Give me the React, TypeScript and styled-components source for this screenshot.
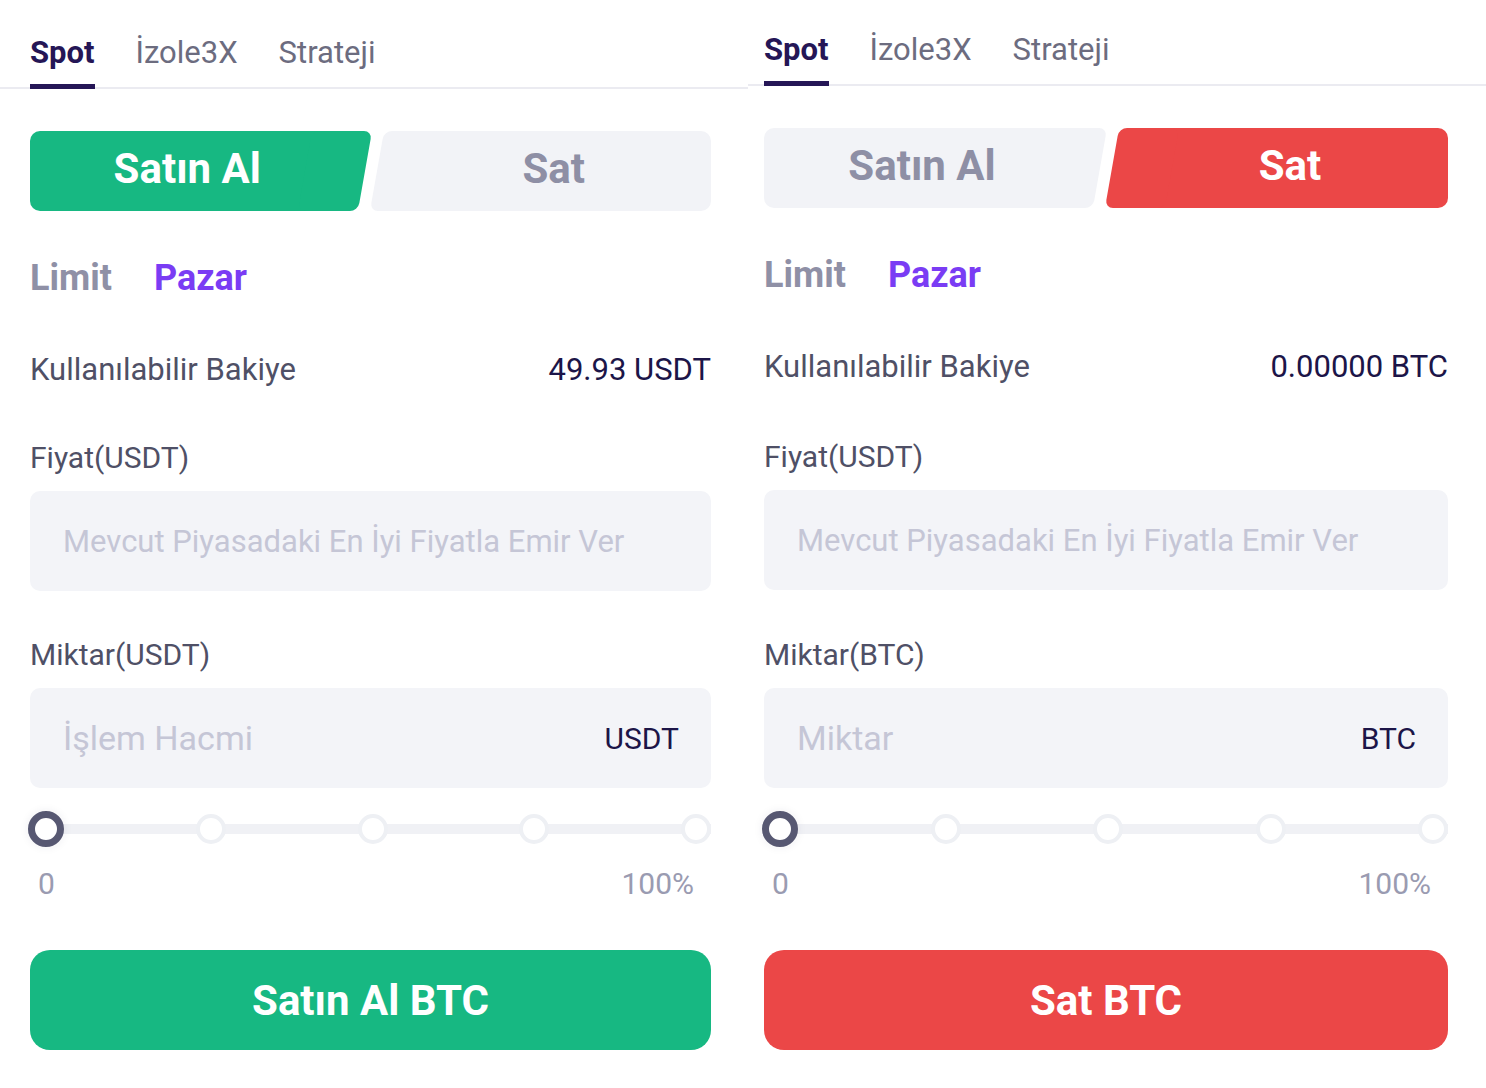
import styled, { createGlobalStyle } from 'styled-components'

const GlobalStyle = createGlobalStyle`
  html, body {
    margin: 0;
    padding: 0;
    background: #ffffff;
  }
  body {
    font-family: Roboto, 'Liberation Sans', sans-serif;
    -webkit-font-smoothing: antialiased;
  }
`

const SPage = styled.div`
  display: flex;
  width: 1486px;
  height: 1088px;
  overflow: hidden;
  background: #ffffff;
`

const SPanel = styled.div<{ $shift: number; $width: number }>`
  box-sizing: border-box;
  width: ${(p) => p.$width}px;
  padding-top: ${(p) => 33 + p.$shift}px;
  display: flex;
  flex-direction: column;
`

const STabBar = styled.div<{ $padLeft: number }>`
  display: flex;
  gap: 41px;
  padding-left: ${(p) => p.$padLeft}px;
  border-bottom: 2px solid #ebebf1;
`

const STab = styled.div<{ $active?: boolean }>`
  line-height: 40px;
  font-size: 31px;
  font-weight: ${(p) => (p.$active ? 700 : 400)};
  color: ${(p) => (p.$active ? '#251656' : '#6c6c7f')};
  padding-bottom: 11px;
  border-bottom: 5px solid ${(p) => (p.$active ? '#251656' : 'transparent')};
  margin-bottom: -2px;
`

const SBody = styled.div<{ $padLeft: number; $padRight: number }>`
  display: flex;
  flex-direction: column;
  padding: 0 ${(p) => p.$padRight}px 0 ${(p) => p.$padLeft}px;
`

const SToggle = styled.div`
  display: flex;
  gap: 12px;
  height: 80px;
  margin-top: 42px;
`

const SToggleButton = styled.div<{ $side: 'left' | 'right'; $bg: string; $color: string }>`
  flex: 1;
  position: relative;
  isolation: isolate;
  display: flex;
  align-items: center;
  justify-content: center;
  font-size: 42px;
  font-weight: 700;
  color: ${(p) => p.$color};
  padding: ${(p) => (p.$side === 'left' ? '0 20px 5px 0' : '0 0 5px 20px')};
  &::before,
  &::after {
    content: '';
    position: absolute;
    z-index: -1;
    top: 0;
    bottom: 0;
    background: ${(p) => p.$bg};
    border-radius: 10px;
  }
  &::before {
    left: ${(p) => (p.$side === 'left' ? '0' : '24px')};
    right: ${(p) => (p.$side === 'left' ? '24px' : '0')};
  }
  &::after {
    width: 60px;
    ${(p) => (p.$side === 'left' ? 'right: 0;' : 'left: 0;')}
    transform: skewX(-10deg);
    transform-origin: ${(p) => (p.$side === 'left' ? 'right center' : 'left center')};
    border-radius: 8px;
  }
`

const SOrderTypes = styled.div`
  display: flex;
  gap: 42px;
  margin-top: 45px;
  line-height: 44px;
  font-size: 36px;
  font-weight: 700;
`

const SOrderType = styled.div<{ $active?: boolean }>`
  color: ${(p) => (p.$active ? '#7a3cf4' : '#8f90a6')};
`

const SBalance = styled.div`
  display: flex;
  justify-content: space-between;
  margin-top: 50px;
  line-height: 40px;
  font-size: 31px;
`

const SBalanceLabel = styled.span`
  color: #4f5066;
`

const SBalanceValue = styled.span`
  color: #1c1548;
`

const SFieldLabel = styled.div<{ $gap: number }>`
  margin-top: ${(p) => p.$gap}px;
  line-height: 40px;
  font-size: 30px;
  color: #4f5066;
`

const SInput = styled.div`
  display: flex;
  align-items: center;
  justify-content: space-between;
  height: 100px;
  margin-top: 13px;
  padding: 0 32px 0 33px;
  background: #f3f4f8;
  border-radius: 10px;
`

const SPlaceholder = styled.span<{ $size: number }>`
  font-size: ${(p) => p.$size}px;
  color: #c5c6d6;
`

const SUnit = styled.span`
  font-size: 30px;
  color: #1c1548;
`

const SSlider = styled.div`
  display: flex;
  align-items: center;
  justify-content: space-between;
  height: 36px;
  margin: 23px 0 0 -2px;
  background: linear-gradient(
    to bottom,
    transparent 13px,
    #f0f1f5 13px,
    #f0f1f5 23px,
    transparent 23px
  );
`

const SDot = styled.div<{ $active?: boolean }>`
  box-sizing: border-box;
  width: ${(p) => (p.$active ? 36 : 30)}px;
  height: ${(p) => (p.$active ? 36 : 30)}px;
  border-radius: 50%;
  background: #ffffff;
  border: ${(p) => (p.$active ? '7px solid #575872' : '4px solid #eef0f4')};
  box-shadow: ${(p) => (p.$active ? '0 0 10px rgba(40, 40, 80, 0.08)' : 'none')};
`

const SSliderLabels = styled.div`
  display: flex;
  justify-content: space-between;
  margin-top: 17px;
  padding: 0 17px 0 8px;
  line-height: 40px;
  font-size: 30px;
  color: #9a9bb1;
`

const SSubmit = styled.div<{ $bg: string }>`
  display: flex;
  align-items: center;
  justify-content: center;
  height: 100px;
  margin-top: 46px;
  border-radius: 20px;
  background: ${(p) => p.$bg};
  color: #ffffff;
  font-size: 42px;
  font-weight: 700;
`

type Side = 'buy' | 'sell'

const GREEN = '#17b882'
const RED = '#eb4747'
const GRAY = '#f2f3f7'

type PanelProps = {
  side: Side
  width: number
  padLeft: number
  padRight: number
  shift: number
  priceGap: number
  amountGap: number
  balance: string
  amountLabel: string
  amountPlaceholder: string
  unit: string
}

const TradePanel = ({
  side,
  width,
  padLeft,
  padRight,
  shift,
  priceGap,
  amountGap,
  balance,
  amountLabel,
  amountPlaceholder,
  unit,
}: PanelProps) => {
  const buy = side === 'buy'
  return (
    <SPanel $width={width} $shift={shift}>
      <STabBar $padLeft={padLeft}>
        <STab $active>Spot</STab>
        <STab>İzole3X</STab>
        <STab>Strateji</STab>
      </STabBar>
      <SBody $padLeft={padLeft} $padRight={padRight}>
        <SToggle>
          <SToggleButton $side="left" $bg={buy ? GREEN : GRAY} $color={buy ? '#ffffff' : '#8e8fa5'}>
            Satın Al
          </SToggleButton>
          <SToggleButton $side="right" $bg={buy ? GRAY : RED} $color={buy ? '#8e8fa5' : '#ffffff'}>
            Sat
          </SToggleButton>
        </SToggle>
        <SOrderTypes>
          <SOrderType>Limit</SOrderType>
          <SOrderType $active>Pazar</SOrderType>
        </SOrderTypes>
        <SBalance>
          <SBalanceLabel>Kullanılabilir Bakiye</SBalanceLabel>
          <SBalanceValue>{balance}</SBalanceValue>
        </SBalance>
        <SFieldLabel $gap={priceGap}>Fiyat(USDT)</SFieldLabel>
        <SInput>
          <SPlaceholder $size={31}>Mevcut Piyasadaki En İyi Fiyatla Emir Ver</SPlaceholder>
        </SInput>
        <SFieldLabel $gap={amountGap}>{amountLabel}</SFieldLabel>
        <SInput>
          <SPlaceholder $size={34}>{amountPlaceholder}</SPlaceholder>
          <SUnit>{unit}</SUnit>
        </SInput>
        <SSlider>
          <SDot $active />
          <SDot />
          <SDot />
          <SDot />
          <SDot />
        </SSlider>
        <SSliderLabels>
          <span>0</span>
          <span>100%</span>
        </SSliderLabels>
        <SSubmit $bg={buy ? GREEN : RED}>{buy ? 'Satın Al BTC' : 'Sat BTC'}</SSubmit>
      </SBody>
    </SPanel>
  )
}

export default function App() {
  return (
    <SPage>
      <GlobalStyle />
      <TradePanel
        side="buy"
        width={748}
        padLeft={30}
        padRight={37}
        shift={0}
        priceGap={48}
        amountGap={44}
        balance="49.93 USDT"
        amountLabel="Miktar(USDT)"
        amountPlaceholder="İşlem Hacmi"
        unit="USDT"
      />
      <TradePanel
        side="sell"
        width={738}
        padLeft={16}
        padRight={38}
        shift={-3}
        priceGap={50}
        amountGap={45}
        balance="0.00000 BTC"
        amountLabel="Miktar(BTC)"
        amountPlaceholder="Miktar"
        unit="BTC"
      />
    </SPage>
  )
}
